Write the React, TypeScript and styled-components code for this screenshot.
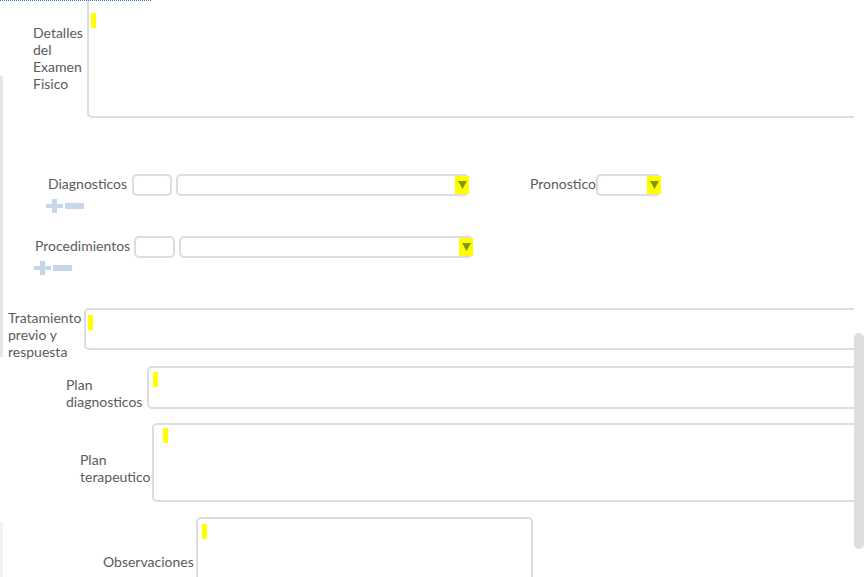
import React from 'react';
import styled, { createGlobalStyle } from 'styled-components';

const GlobalStyle = createGlobalStyle`
  html, body {
    margin: 0;
    padding: 0;
    background: #ffffff;
  }
  body {
    font-family: Lato, 'Open Sans', sans-serif;
    font-size: 14px;
    color: #5b5b5b;
  }
`;

const StyledPage = styled.div`
  position: relative;
  width: 864px;
  height: 577px;
  overflow: hidden;
  background: #fff;
`;

const StyledForm = styled.div`
  width: 854px;
  height: 577px;
  overflow: hidden;
  display: flex;
  flex-direction: column;
`;

const StyledTopRule = styled.div`
  position: absolute;
  left: 0;
  top: 0;
  width: 151px;
  border-top: 1px dotted #3f7bb6;
`;

const StyledEdge = styled.div<{ $top: number; $height: number; $faint?: boolean }>`
  position: absolute;
  left: 0;
  top: ${({ $top }) => $top}px;
  width: 3px;
  height: ${({ $height }) => $height}px;
  background: ${({ $faint }) => ($faint ? '#f2f2f2' : '#e6e6e6')};
  border-radius: 0 3px 0 0;
`;

const StyledScrollbar = styled.div`
  position: absolute;
  left: 854px;
  top: 333px;
  width: 10px;
  height: 216px;
  border-radius: 5px;
  background: #dedede;
`;

// rows keep the height of their field; taller labels simply hang over
const StyledRow = styled.div<{ $indent: number; $mt: number; $height: number }>`
  display: flex;
  align-items: flex-start;
  gap: 4px;
  padding-left: ${({ $indent }) => $indent}px;
  margin-top: ${({ $mt }) => $mt}px;
  height: ${({ $height }) => $height}px;
  flex-shrink: 0;
`;

const StyledLabel = styled.div<{ $width: number; $top: number }>`
  width: ${({ $width }) => $width}px;
  flex-shrink: 0;
  margin-top: ${({ $top }) => $top}px;
  line-height: 17px;
  color: #5b5b5b;
`;

const StyledInlineLabel = styled.span<{ $width: number; $ml?: number }>`
  width: ${({ $width }) => $width}px;
  flex-shrink: 0;
  line-height: 19px;
  margin-left: ${({ $ml }) => $ml ?? 0}px;
  white-space: nowrap;
`;

const StyledArea = styled.div<{ $width?: number; $height: number }>`
  box-sizing: border-box;
  width: ${({ $width }) => ($width ? `${$width}px` : 'calc(100% + 20px)')};
  flex-shrink: 0;
  height: ${({ $height }) => $height}px;
  border: 2px solid #dddddd;
  border-radius: 5px;
  padding: 4px 0 0 2px;
  background: #fff;
`;

const StyledFlexArea = styled(StyledArea)`
  flex: 1 0 auto;
`;

const StyledCursor = styled.span<{ $ml: number; $mt: number }>`
  display: block;
  width: 5px;
  height: 15px;
  margin-left: ${({ $ml }) => $ml}px;
  margin-top: ${({ $mt }) => $mt}px;
  background: #ffff00;
`;

const StyledInput = styled.div<{ $width: number }>`
  box-sizing: border-box;
  width: ${({ $width }) => $width}px;
  height: 22px;
  border: 2px solid #dddddd;
  border-radius: 5px;
  background: #fff;
  flex-shrink: 0;
`;

const StyledSelect = styled(StyledInput)`
  display: flex;
  justify-content: flex-end;
  align-items: flex-start;
`;

const StyledArrow = styled.span`
  width: 14px;
  height: 18px;
  margin-right: -2px;
  background: #ffff00;
  display: flex;
  align-items: center;
  justify-content: center;
`;

const StyledButtons = styled.div<{ $indent: number }>`
  display: flex;
  align-items: center;
  gap: 2px;
  padding-left: ${({ $indent }) => $indent}px;
  margin-top: 3px;
  height: 14px;
  flex-shrink: 0;
`;

const Arrow = () => (
  <StyledArrow>
    <svg width="9" height="8" viewBox="0 0 9 8">
      <path d="M0 0 H9 L4.5 8 Z" fill="#7f9a12" />
    </svg>
  </StyledArrow>
);

const PlusMinus = ({ indent }: { indent: number }) => (
  <StyledButtons $indent={indent}>
    <svg width="17" height="14" viewBox="0 0 17 14">
      <path d="M6 0 H11 V5 H17 V9 H11 V14 H6 V9 H0 V5 H6 Z" fill="#c6d7ea" />
    </svg>
    <svg width="19" height="6" viewBox="0 0 19 6">
      <rect width="19" height="6" fill="#c6d7ea" />
    </svg>
  </StyledButtons>
);

const App = () => (
  <StyledPage>
    <GlobalStyle />
    <StyledForm>
      <StyledRow $indent={33} $mt={-12} $height={130}>
        <StyledLabel $width={50} $top={36}>Detalles del Examen Fisico</StyledLabel>
        <StyledFlexArea $height={130}>
          <StyledCursor $ml={0} $mt={19} />
        </StyledFlexArea>
      </StyledRow>

      <StyledRow $indent={48} $mt={56} $height={22}>
        <StyledInlineLabel $width={80}>Diagnosticos</StyledInlineLabel>
        <StyledInput $width={40} />
        <StyledSelect $width={293}>
          <Arrow />
        </StyledSelect>
        <StyledInlineLabel $width={62} $ml={57}>Pronostico</StyledInlineLabel>
        <StyledSelect $width={65}>
          <Arrow />
        </StyledSelect>
      </StyledRow>
      <PlusMinus indent={46} />

      <StyledRow $indent={35} $mt={23} $height={22}>
        <StyledInlineLabel $width={95}>Procedimientos</StyledInlineLabel>
        <StyledInput $width={41} />
        <StyledSelect $width={294}>
          <Arrow />
        </StyledSelect>
      </StyledRow>
      <PlusMinus indent={34} />

      <StyledRow $indent={8} $mt={33} $height={42}>
        <StyledLabel $width={72} $top={1}>Tratamiento previo y respuesta</StyledLabel>
        <StyledFlexArea $height={42}>
          <StyledCursor $ml={0} $mt={1} />
        </StyledFlexArea>
      </StyledRow>

      <StyledRow $indent={66} $mt={16} $height={43}>
        <StyledLabel $width={77} $top={10}>Plan diagnosticos</StyledLabel>
        <StyledFlexArea $height={43}>
          <StyledCursor $ml={2} $mt={0} />
        </StyledFlexArea>
      </StyledRow>

      <StyledRow $indent={80} $mt={14} $height={79}>
        <StyledLabel $width={68} $top={28}>Plan terapeutico</StyledLabel>
        <StyledFlexArea $height={79}>
          <StyledCursor $ml={7} $mt={-1} />
        </StyledFlexArea>
      </StyledRow>

      <StyledRow $indent={103} $mt={15} $height={90}>
        <StyledLabel $width={89} $top={36}>Observaciones</StyledLabel>
        <StyledArea $width={337} $height={90}>
          <StyledCursor $ml={2} $mt={1} />
        </StyledArea>
      </StyledRow>
    </StyledForm>

    <StyledTopRule />
    <StyledEdge $top={75} $height={282} />
    <StyledEdge $top={522} $height={60} $faint />
    <StyledScrollbar />
  </StyledPage>
);

export default App;
